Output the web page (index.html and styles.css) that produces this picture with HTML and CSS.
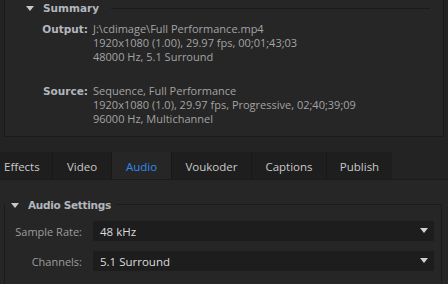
FILE: index.html
```html
<!DOCTYPE html>
<html lang="en">
<head>
    <meta charset="UTF-8">
    <title>Export Settings</title>
    <link rel="stylesheet" href="styles.css">
</head>
<body>

    <div class="summary">
        <div class="section-head">
            <span class="twisty"></span>
            <span class="section-title">Summary</span>
            <span class="head-line"></span>
        </div>
        <div class="info">
            <div class="info-label">Output:</div>
            <div class="info-value">J:\cdimage\Full Performance.mp4<br>1920x1080 (1.00), 29.97 fps, 00;01;43;03<br>48000 Hz, 5.1 Surround</div>
        </div>
        <div class="info source">
            <div class="info-label">Source:</div>
            <div class="info-value">Sequence, Full Performance<br>1920x1080 (1.0), 29.97 fps, Progressive, 02;40;39;09<br>96000 Hz, Multichannel</div>
        </div>
    </div>

    <div class="tabs">
        <div class="tab tab-effects">Effects</div>
        <div class="tab tab-video">Video</div>
        <div class="tab tab-audio active">Audio</div>
        <div class="tab tab-voukoder">Voukoder</div>
        <div class="tab tab-captions">Captions</div>
        <div class="tab tab-publish">Publish</div>
    </div>

    <div class="panel">
        <div class="group">
            <div class="group-head">
                <span class="twisty"></span>
                <span class="section-title">Audio Settings</span>
            </div>
            <div class="field">
                <label class="field-label">Sample Rate:</label>
                <div class="select">48 kHz<span class="arrow"></span></div>
            </div>
            <div class="field">
                <label class="field-label">Channels:</label>
                <div class="select">5.1 Surround<span class="arrow"></span></div>
            </div>
        </div>
    </div>

</body>
</html>
```

FILE: styles.css
```css
body {
    margin: 0;
    width: 448px;
    height: 284px;
    overflow: hidden;
    background-color: #232323;
    font-family: "Open Sans", "Noto Sans", sans-serif;
    font-size: 11px;
    color: #a3a3a3;
}

.summary {
    margin-left: 4px;
    width: 438px;
    height: 136px;
    border-left: 1px solid #1b1b1b;
    border-right: 1px solid #1b1b1b;
    border-bottom: 1px solid #1b1b1b;
    background-color: #262626;
}

.section-head {
    display: flex;
    align-items: center;
    height: 16px;
    padding-left: 21px;
}

.twisty {
    width: 0;
    height: 0;
    border-style: solid;
    border-width: 5px 4px 0 4px;
    border-color: #c8c8c8 transparent transparent transparent;
    margin-right: 9px;
}

.section-title {
    font-family: "DejaVu Sans", sans-serif;
    font-weight: bold;
    font-size: 10.5px;
    color: #b2b6bd;
}

.group-head .section-title {
    letter-spacing: -0.3px;
}

.head-line {
    flex: 1;
    height: 1px;
    margin: 0 13px 0 12px;
    background-color: #1b1b1b;
}

.info {
    display: flex;
    margin-top: 6px;
    line-height: 14px;
}

.info.source {
    margin-top: 20px;
}

.info-label {
    width: 83px;
    text-align: right;
    font-family: "DejaVu Sans", sans-serif;
    font-weight: bold;
    font-size: 10.5px;
    color: #b2b6bd;
}

.info-value {
    padding-left: 5px;
    white-space: nowrap;
}

/* Tabs */
.tabs {
    display: flex;
    margin-top: 15px;
    height: 27px;
    border-bottom: 1px solid #1b1b1b;
}

.tab {
    display: flex;
    align-items: center;
    justify-content: center;
    padding-top: 1px;
    box-sizing: border-box;
    background-color: #1e1e1e;
    border-right: 1px solid #181818;
    color: #c9c9c9;
    font-size: 11.5px;
}

.tab-effects { width: 53px; justify-content: flex-start; padding-left: 4px; }
.tab-video { width: 59px; }
.tab-audio { width: 60px; }
.tab-voukoder { width: 80px; }
.tab-captions { width: 75px; }
.tab-publish { width: 65px; border-right: none; }

.tab.active {
    background-color: #262626;
    color: #2d8ceb;
}

/* Audio panel */
.panel {
    height: 104px;
    background-color: #262626;
    padding-top: 24px;
    box-sizing: border-box;
}

.group {
    position: relative;
    margin-left: 4px;
    width: 438px;
    height: 90px;
    border-left: 1px solid #1b1b1b;
    border-right: 1px solid #1b1b1b;
    border-top: 1px solid #1b1b1b;
    padding-top: 16px;
    box-sizing: border-box;
}

.group-head {
    position: absolute;
    top: -8px;
    left: 0;
    display: flex;
    align-items: center;
    height: 16px;
    padding: 0 6px 0 6px;
    background-color: #262626;
}

.field {
    display: flex;
    align-items: center;
    margin-bottom: 10px;
}

.field-label {
    width: 77px;
    text-align: right;
    color: #9d9d9d;
    font-size: 11px;
}

.select {
    position: relative;
    display: flex;
    align-items: center;
    margin-left: 11px;
    width: 341px;
    height: 20px;
    padding-left: 7px;
    box-sizing: border-box;
    background-color: #1d1d1d;
    color: #dcdcdc;
    font-size: 11.5px;
}

.arrow {
    position: absolute;
    right: 6px;
    top: 7px;
    width: 0;
    height: 0;
    border-style: solid;
    border-width: 5px 4px 0 4px;
    border-color: #d0d0d0 transparent transparent transparent;
}
```
